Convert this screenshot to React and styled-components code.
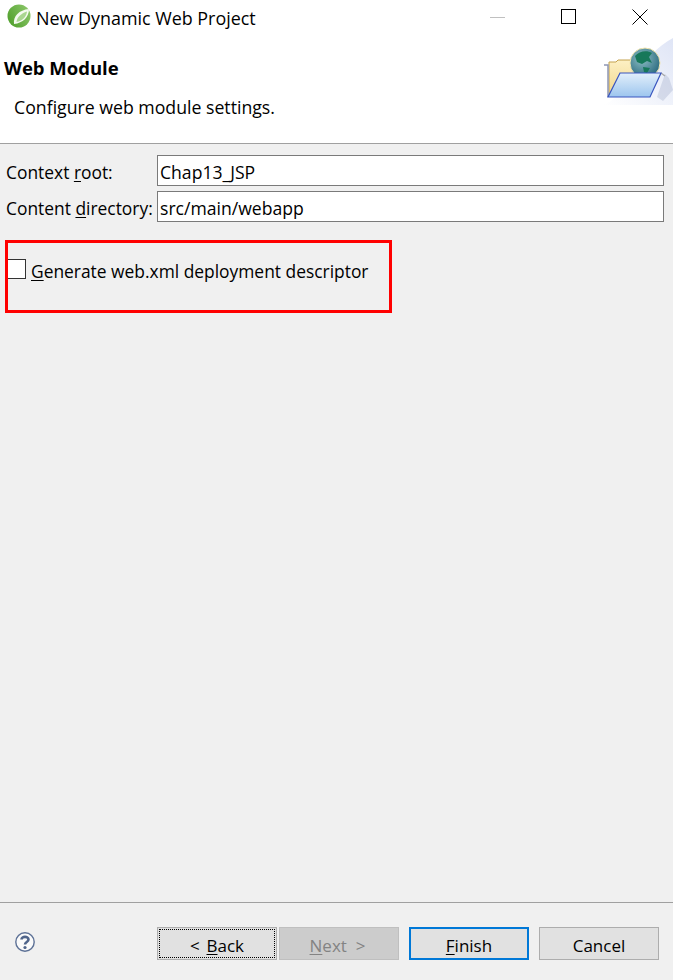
import React from "react";
import styled, { createGlobalStyle } from "styled-components";

const GlobalStyle = createGlobalStyle`
  html, body {
    margin: 0;
    padding: 0;
    background: #f0f0f0;
  }
  * {
    box-sizing: border-box;
  }
`
const Dialog = styled.div`
  display: flex;
  flex-direction: column;
  width: 673px;
  height: 980px;
  background: #f0f0f0;
  color: #000000;
  font-family: "Open Sans", "Noto Sans", sans-serif;
  font-size: 17px;
  overflow: hidden;
`
const Header = styled.div`
  display: flex;
  flex-direction: column;
  height: 144px;
  background: #ffffff;
  border-bottom: 1px solid #a0a0a0;
`
const TitleBar = styled.div`
  display: flex;
  align-items: flex-start;
  height: 36px;
  padding-left: 7px;
`
const LogoMark = styled.svg`
  display: block;
  margin-top: 4px;
`
const TitleText = styled.div`
  margin-left: 5px;
  font-size: 17.9px;
  line-height: 36px;
  color: #000000;
`
const WindowButtons = styled.div`
  display: flex;
  margin-left: auto;
  margin-right: -2px;
`
const WindowButton = styled.div`
  display: flex;
  align-items: center;
  justify-content: center;
  width: 71px;
  height: 33px;
`
const Banner = styled.div`
  display: flex;
  justify-content: space-between;
  flex: 1;
`
const BannerText = styled.div`
  display: flex;
  flex-direction: column;
`
const BannerTitle = styled.div`
  margin: 20px 0 0 4px;
  font-size: 18.5px;
  font-weight: 700;
  line-height: 24px;
`
const BannerDesc = styled.div`
  margin: 15px 0 0 14px;
  font-size: 17.7px;
  line-height: 24px;
`
const BannerArt = styled.svg`
  display: block;
  margin-top: 2px;
`
const Form = styled.div`
  display: flex;
  flex-direction: column;
  flex: 1;
  padding: 11px 9px 0 6px;
`
const FieldRow = styled.div`
  display: flex;
  align-items: center;
  height: 31px;
  margin-bottom: 5px;
`
const FieldLabel = styled.label`
  width: 151px;
  padding-top: 2px;
  font-size: 17.4px;
  line-height: 24px;
  white-space: nowrap;
`
const Mnemonic = styled.span`
  text-decoration: underline;
  text-underline-offset: 2px;
  text-decoration-thickness: 1px;
`
const TextField = styled.div`
  flex: 1;
  height: 31px;
  padding-left: 2px;
  background: #ffffff;
  border: 1px solid #7a7a7a;
  font-size: 17.6px;
  line-height: 32px;
`
const Highlight = styled.div`
  display: flex;
  align-items: flex-start;
  width: 387px;
  height: 73px;
  margin: 13px 0 0 -1px;
  padding-top: 16px;
  border: 3px solid #ff0000;
`
const CheckBox = styled.div`
  width: 18px;
  height: 20px;
  background: #ffffff;
  border: 1px solid #333333;
  border-left: none;
`
const CheckLabel = styled.div`
  margin-left: 5px;
  font-size: 17.4px;
  line-height: 25px;
`
const Footer = styled.div`
  display: flex;
  align-items: flex-start;
  height: 78px;
  padding: 24px 14px 0 15px;
  border-top: 1px solid #a0a0a0;
`
const HelpIcon = styled.svg`
  display: block;
  margin-right: 122px;
  margin-top: 5px;
`
const Button = styled.div`
  display: flex;
  align-items: center;
  justify-content: center;
  position: relative;
  width: 120px;
  height: 33px;
  margin-left: ${props => props.gap || 0}px;
  padding: 4px ${props => props.disabled ? 3 : 0}px 0 0;
  background: ${props => props.disabled ? "#cccccc" : "#e1e1e1"};
  border: ${props => props.primary ? "2px solid #0078d7" : "1px solid #adadad"};
  border-color: ${props => props.disabled ? "#bfbfbf" : ""};
  color: ${props => props.disabled ? "#838383" : "#000000"};
  line-height: 24px;
  white-space: pre;
`
const BackLabel = styled.span`
  word-spacing: -1px;
`
const FocusRing = styled.div`
  position: absolute;
  top: 1px;
  left: 1px;
  right: 1px;
  bottom: 1px;
  border: 1px dotted #000000;
`

const SpringLogo = () => (
  <LogoMark width="24" height="24" viewBox="0 0 24 24">
    <defs>
      <linearGradient id="leaf" x1="0" y1="0.8" x2="1" y2="0.2">
        <stop offset="0" stopColor="#4f9f2b" />
        <stop offset="1" stopColor="#8cc76a" />
      </linearGradient>
    </defs>
    <circle cx="12" cy="12" r="11.5" fill="url(#leaf)" />
    <path d="M7 20C6 12 12 6 22 5 C22 13 16 19 7 20Z" fill="#f4faef" />
    <path d="M9.500 18C10 13 14 9.500 20 7.500 C19.500 13 15 17 9.500 18Z" fill="#a9d690" />
  </LogoMark>
)

const FolderGlobe = () => (
  <BannerArt width="70" height="67" viewBox="0 0 70 67">
    <defs>
      <linearGradient id="bg" x1="0" y1="1" x2="1" y2="0">
        <stop offset="0" stopColor="#ffffff" />
        <stop offset="1" stopColor="#dfe5f6" />
      </linearGradient>
      <linearGradient id="front" x1="0" y1="0" x2="0" y2="1">
        <stop offset="0" stopColor="#e2effb" />
        <stop offset="1" stopColor="#9cc5ee" />
      </linearGradient>
      <linearGradient id="back" x1="0" y1="0" x2="0" y2="1">
        <stop offset="0" stopColor="#fdf0c4" />
        <stop offset="1" stopColor="#f0d68c" />
      </linearGradient>
      <radialGradient id="globe" cx="0.4" cy="0.35" r="0.75">
        <stop offset="0" stopColor="#8fc0c4" />
        <stop offset="1" stopColor="#1f6078" />
      </radialGradient>
    </defs>
    <path d="M70 0V67H0C20 62 40 15 70 0Z" fill="url(#bg)" />
    <path d="M54 59L62 36 66 40 70 52 60 63Z" fill="#aab4cf" opacity="0.4" />
    <path d="M6 24H13L15 22H34V58H6Z" fill="url(#back)" stroke="#c4a24e" />
    <path d="M1 27H5V59" fill="none" stroke="#8f96b4" strokeWidth="1.500" />
    <path d="M58 35L62 38" fill="none" stroke="#a9a9a9" strokeWidth="1.500" />
    <circle cx="42" cy="25" r="15" fill="url(#globe)" stroke="#f3e6b0" />
    <path d="M32 18C36 13 44 12 49 15L46 19 49 25 44 23 39 26 34 24Z" fill="#17785a" />
    <path d="M40 29L47 30 44 35 41 34Z" fill="#17785a" />
    <path d="M17 35H58L47 59H5Z" fill="url(#front)" stroke="#3a56c0" strokeWidth="1.200" />
  </BannerArt>
)

const HelpGlyph = () => (
  <HelpIcon width="20" height="20" viewBox="0 0 20 20">
    <circle cx="10" cy="10" r="9.200" fill="#fafafa" stroke="#5d7196" strokeWidth="1.400" />
    <path d="M6.500 7.500C6.500 4 13.500 4 13.500 7.500C13.500 10 10 10 10 12.500" fill="none" stroke="#4f648a" strokeWidth="2.600" />
    <circle cx="10" cy="15.500" r="1.600" fill="#4f648a" />
  </HelpIcon>
)

export default function App() {
  return (
    <Dialog>
      <GlobalStyle />
      <Header>
        <TitleBar>
          <SpringLogo />
          <TitleText>New Dynamic Web Project</TitleText>
          <WindowButtons>
            <WindowButton>
              <svg width="16" height="16"><path d="M0 8.500H15" stroke="#c0c0c0" /></svg>
            </WindowButton>
            <WindowButton>
              <svg width="16" height="16"><rect x="0.500" y="0.500" width="14" height="14" fill="none" stroke="#000000" /></svg>
            </WindowButton>
            <WindowButton>
              <svg width="16" height="16"><path d="M0.500 0.500L15.500 15.500M15.500 0.500L0.500 15.500" stroke="#000000" /></svg>
            </WindowButton>
          </WindowButtons>
        </TitleBar>
        <Banner>
          <BannerText>
            <BannerTitle>Web Module</BannerTitle>
            <BannerDesc>Configure web module settings.</BannerDesc>
          </BannerText>
          <FolderGlobe />
        </Banner>
      </Header>
      <Form>
        <FieldRow>
          <FieldLabel>Context <Mnemonic>r</Mnemonic>oot:</FieldLabel>
          <TextField>Chap13_JSP</TextField>
        </FieldRow>
        <FieldRow>
          <FieldLabel>Content <Mnemonic>d</Mnemonic>irectory:</FieldLabel>
          <TextField>src/main/webapp</TextField>
        </FieldRow>
        <Highlight>
          <CheckBox />
          <CheckLabel><Mnemonic>G</Mnemonic>enerate web.xml deployment descriptor</CheckLabel>
        </Highlight>
      </Form>
      <Footer>
        <HelpGlyph />
        <Button>
          <FocusRing />
          <BackLabel>{"<  "}<Mnemonic>B</Mnemonic>ack</BackLabel>
        </Button>
        <Button disabled gap={2}><Mnemonic>N</Mnemonic>ext  {">"}</Button>
        <Button primary gap={10}><Mnemonic>F</Mnemonic>inish</Button>
        <Button gap={10}>Cancel</Button>
      </Footer>
    </Dialog>
  );
}
